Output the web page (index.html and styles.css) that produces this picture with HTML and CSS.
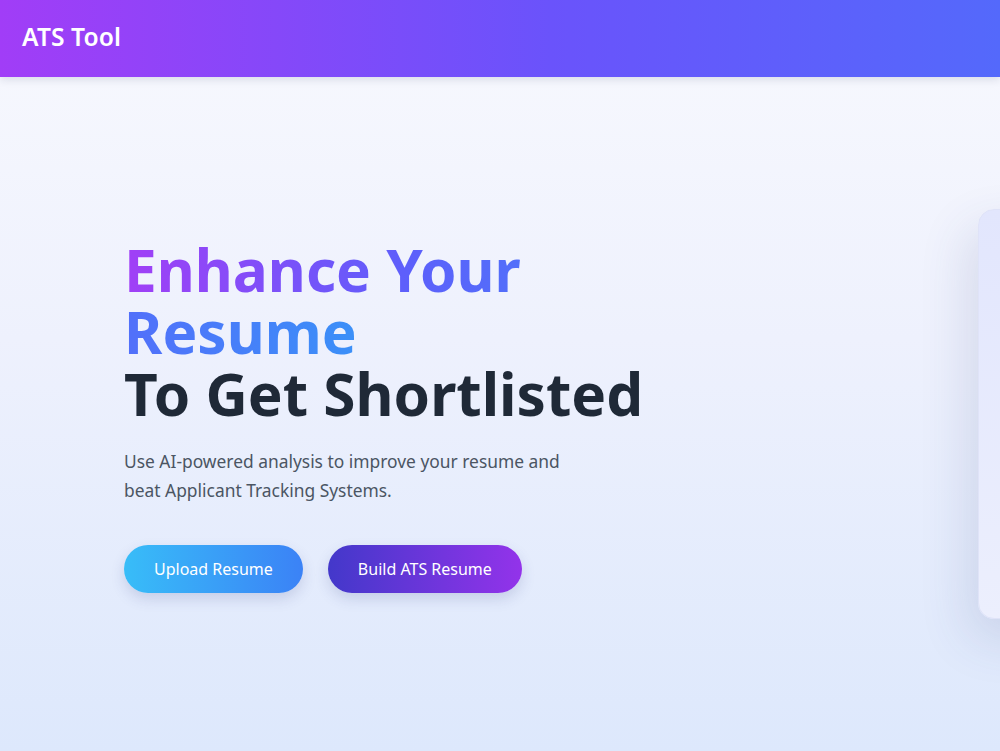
FILE: index.html
```html
<!DOCTYPE html>
<html lang="en">
<head>
<meta charset="utf-8">
<title>ATS Tool</title>
<link rel="stylesheet" href="styles.css">
</head>
<body>
<header class="topbar">
  <div class="brand">ATS Tool</div>
</header>
<main class="page">
  <section class="hero">
    <div class="hero-copy">
      <h1 class="hero-title"><span class="accent">Enhance Your<br>Resume</span><br>To Get Shortlisted</h1>
      <p class="hero-lead">Use AI-powered analysis to improve your resume and<br>beat Applicant Tracking Systems.</p>
      <div class="actions">
        <button class="btn btn-upload">Upload Resume</button>
        <button class="btn btn-build">Build ATS Resume</button>
      </div>
    </div>
    <div class="preview-card"></div>
  </section>
</main>
</body>
</html>
```
FILE: styles.css
```css
* { box-sizing: border-box; }

html, body {
  margin: 0;
  height: 100%;
}

body {
  font-family: "Noto Sans", "Open Sans", Arial, sans-serif;
  background: linear-gradient(180deg, #f8f9fe 0%, #eef1fd 45%, #dde8fc 100%);
  overflow: hidden;
  color: #1f2937;
}

.topbar {
  position: relative;
  z-index: 2;
  height: 77px;
  display: flex;
  align-items: center;
  padding: 0 22px 4px;
  background: linear-gradient(90deg, #a13df7 0%, #6a53fb 55%, #5469fb 100%);
  box-shadow: 0 3px 8px rgba(30, 40, 80, 0.12);
}

.brand {
  color: #ffffff;
  font-size: 24.6px;
  font-weight: 600;
  letter-spacing: 0.1px;
}

.page {
  height: calc(100% - 77px);
  overflow: hidden;
}

.hero {
  width: 1378px;
  height: 100%;
  display: grid;
  grid-template-columns: minmax(0, 1fr) 400px;
  column-gap: 60px;
  align-items: center;
  padding-left: 124px;
}

.hero-copy {
  padding-top: 3px;
}

.hero-title {
  margin: 0;
  font-size: 58.5px;
  line-height: 62px;
  font-weight: 700;
  color: #1f2937;
}

.accent {
  background: linear-gradient(90deg, #a13ff6 0%, #5d5ffb 45%, #3b90f8 100%);
  -webkit-background-clip: text;
  background-clip: text;
  color: transparent;
}

.hero-lead {
  margin: 23px 0 0;
  font-size: 17.4px;
  line-height: 29px;
  color: #4b5563;
}

.actions {
  display: flex;
  gap: 25px;
  margin-top: 40px;
}

.btn {
  height: 48px;
  border: 0;
  border-radius: 24px;
  padding: 0 30px;
  font-family: inherit;
  font-size: 16px;
  color: #ffffff;
  cursor: pointer;
  box-shadow: 0 6px 14px rgba(60, 70, 140, 0.18);
}

.btn-upload {
  background: linear-gradient(90deg, #38bdf8 0%, #3b82f6 100%);
}

.btn-build {
  background: linear-gradient(90deg, #4338ca 0%, #9333ea 100%);
}

.preview-card {
  height: 410px;
  border-radius: 16px;
  border: 1px solid #dfe3f8;
  background: linear-gradient(180deg, #e2e6fd 0%, #eceffd 100%);
  box-shadow: -10px 20px 50px rgba(60, 70, 130, 0.14);
}
```
